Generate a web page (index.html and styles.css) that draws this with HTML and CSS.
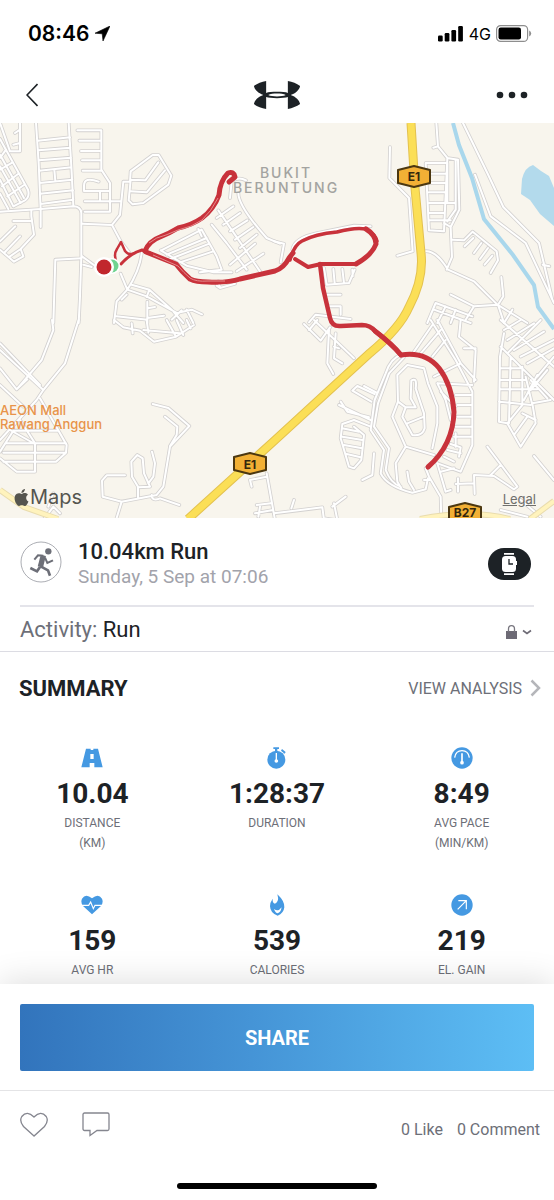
FILE: index.html
```html
<!DOCTYPE html>
<html lang="en">
<head>
<meta charset="utf-8">
<meta name="viewport" content="width=device-width, initial-scale=1">
<title>10.04km Run</title>
<link rel="stylesheet" href="styles.css">
</head>
<body>
<div class="status">
  <div class="status-time"><span>08:46</span>
    <svg width="15" height="15" viewBox="0 0 15 15"><path d="M15 0L0 7.200 7.200 7.800 8 15z" stroke="#000" stroke-width=".6"/></svg>
  </div>
  <div class="status-right">
    <svg width="26" height="16" viewBox="0 0 26 16"><rect y="9.500" width="4.700" height="6" rx="1.200"/><rect x="6.700" y="7" width="4.700" height="8.500" rx="1.200"/><rect x="13.400" y="4" width="4.700" height="11.500" rx="1.200"/><rect x="20.200" width="4.700" height="15.500" rx="1.200"/></svg>
    <span>4G</span>
    <svg width="36" height="17" viewBox="0 0 36 17"><rect x=".6" y=".6" width="31" height="15.800" rx="4" fill="none" stroke="#8e8e8e" stroke-width="1.200"/><rect x="2.500" y="2.500" width="22.500" height="12" rx="2.200"/><path d="M33.200 5.500q2 .8 2 3t-2 3z" fill="#8e8e8e"/></svg>
  </div>
</div>
<header class="nav">
  <button class="icon-btn" aria-label="Back"><svg width="12" height="24" viewBox="0 0 12 24"><path d="M11.500 1L1 12l10.500 11" fill="none" stroke="#1d2226" stroke-width="1.600"/></svg></button>
  <svg class="logo" width="48" height="28" viewBox="0 0 132 80" role="img" aria-label="Logo"><path fill-rule="evenodd" d="M35 0C22 2 10 7 0 14C2 25 12 35 27 40C12 45 2 55 0 66C10 73 22 78 35 80V46C46 50 86 50 97 46V80C110 78 122 73 132 66C130 55 120 45 105 40C120 35 130 25 132 14C122 7 110 2 97 0V34C86 30 46 30 35 34zM41 40C52 34.500 80 34.500 91 40C80 45.500 52 45.500 41 40z"/></svg>
  <button class="icon-btn" aria-label="More"><svg width="32" height="8" viewBox="0 0 32 8"><circle cx="4" cy="4" r="3.300"/><circle cx="16" cy="4" r="3.300"/><circle cx="28" cy="4" r="3.300"/></svg></button>
</header>

<section class="map" aria-label="Route map">
  <svg class="map-art" viewBox="0 0 554 395">
    <defs>
      <g id="roads">
        <g transform="scale(.33333)">
          <path d="M108 0L116 120 122 260 122 312M206 0L214 130 220 248M114 53L210 43M115 82L211 74M116 112L213 104M118 143L214 133M119 180L217 170M121 212L219 202M122 243L220 230M163 140L166 175"/>
          <path class="main" d="M0 266L122 258 220 250Q242 250 244 270V400L240 520 236 600"/>
          <path d="M0 48L84 200Q90 222 75 232L40 250M0 95L72 225M0 130L62 240M0 170L40 250M18 80L0 105M38 118L0 140M55 152L6 190M72 186L22 220M0 212L25 258"/>
          <path d="M0 0L30 85H60V0M60 20L45 30M60 60L40 65M232 22H304V140L330 180V266H254M238 53H304M243 84H304M246 112H304M248 143H306M296 176Q252 160 252 188V204H330M254 235H362M300 204V235"/>
          <path d="M94 262V280L102 335 62 378 70 400 42 416 0 380M40 294H94M46 310L0 355M60 340L12 390M62 378L30 400"/>
          <path d="M246 302L336 306 360 276 370 176H390L392 145 458 96H476L514 158 505 185 430 240 398 244 386 232 392 170 436 172 475 118M392 205L440 208 495 142M336 306L362 355 390 392"/>
          <path d="M160 600L166 410 244 406M246 400L290 432M250 425L275 432"/>
          <path d="M425 390Q420 440 382 500L350 535 342 600M362 452L382 500 440 520 530 570 575 560 606 574M395 485L448 500 515 560 550 600M448 500L440 522M365 530L380 515M350 580L442 590 M442 536V600M442 556L465 552M442 585L492 578M515 590L545 562M560 560L580 600"/>
          <path d="M484 382L605 320 650 400 665 440 600 448M482 382L560 428 640 448 695 448M500 395L620 345M510 408L628 362M540 418L640 385M595 318L605 340M655 262L780 445M635 305L680 360 740 440M650 285L700 250M670 305L720 270M690 325L742 292M705 350L760 312M720 375L770 335M690 425L765 362M710 445L790 392M690 225L695 175Q715 160 738 172M715 210Q715 250 800 345L840 362M655 475L660 495 650 488M660 495L705 482"/>
        </g>
        <g transform="translate(274 0) scale(.33333)">
          <path d="M348 72L346 165 405 225 416 385M370 398L416 385M452 385Q485 380 522 440L600 475 670 545 760 600M487 0L492 70 478 74M492 70L520 105 552 110 556 260 530 312 534 402 518 440M520 105L510 325 465 322 455 120H515M462 152H514M464 180H512M465 208H512M466 240H545M466 270H508M466 292H530M520 240V120M545 110V260L520 295M530 312L510 300M536 350L570 352 596 326 668 385 672 412 650 450M572 370L598 345M600 390L622 360M618 408L642 375M632 425L655 398"/>
          <path d="M567 0L640 150 688 252 795 360 835 530M603 155L650 280 755 360 840 540M806 425L826 430"/>
          <path d="M682 462L688 520 672 545 600 550 530 515M600 550L575 590M672 545L690 600M485 540L460 600M485 540L595 580M515 550L490 600M545 560L530 600M480 560L590 600M715 560L690 600M55 380Q60 345 130 330L240 308 290 310M0 355L30 362 20 418"/>
          <path d="M150 435L158 485 225 480 242 440M178 438L182 480M205 438L210 480M235 440L236 460M158 515H200M160 550H200V575M105 598L125 575 230 588"/>
        </g>
        <g transform="translate(0 197) scale(.33333)">
          <path class="main" d="M0 90L130 210 195 130 236 0M130 210L110 240 0 360"/>
          <path d="M156 0L160 30 125 120 50 208M0 70L120 195M0 145L50 208M0 195L70 260M50 208L82 178M120 235L200 375 198 398 168 425H10M30 330L105 372V455H50L0 415M0 395L40 332H172M20 370H198M10 398H198M60 300L105 370"/>
          <path d="M342 0L370 22 420 32 462 65 528 50 582 15M395 10L398 40M430 30L540 40M440 0L445 38M500 0L528 50M530 0L550 45M560 0L572 25"/>
          <path d="M458 252L505 264 568 318 510 380 490 500 470 525 365 545 348 600M495 290L532 320 530 345 510 378M375 466H320L306 482 308 530 365 545M455 525Q455 545 480 535L538 555M414 535V500L396 470 394 425 412 405 428 415 432 460 450 500 414 502M456 395L465 430 460 470 445 490"/>
          <path d="M800 460L825 600M755 500L750 480 800 470M770 555L812 550M765 580L818 570M775 590L780 560M130 600L160 560 180 580M145 560L160 520"/>
        </g>
        <g transform="translate(274 197) scale(.33333)">
          <path d="M90 12L140 62 168 22M120 0L240 115M105 30L130 0M165 30L160 130 178 162M185 40L180 115 205 130M180 80L195 85"/>
          <path d="M380 105Q350 115 335 160L302 240 290 330 330 390 320 460Q340 500 415 518L455 508 462 475M390 112L345 160 312 250 300 320 345 385 335 450Q350 490 380 500M400 135L370 165 372 245 355 290 395 380 480 405M400 135L450 145 462 190 490 260V310L475 385M372 245L395 262 385 290 415 345Q445 350 452 325L450 280 425 205Q430 170 412 182L410 235 425 262 395 262M400 310L450 290M395 380L365 430 370 485 382 505M400 455L405 485 420 510"/>
          <path d="M302 222L250 198 235 212 292 245M270 198L308 218M200 245L220 275 285 292M195 255L290 300M290 320L240 300 205 312 200 355 225 440 240 445 262 420 270 345 240 320M205 325L255 335M205 350L265 360M210 375L265 385M218 402L260 412M300 400L295 465 265 480"/>
          <path d="M420 95L475 15M440 100L500 30M475 110L515 60M470 0L545 120 595 215V375L560 455 490 430M490 0L560 130M560 0L555 50 605 90 600 185M570 85H605M480 170L560 130 605 180M490 190L595 195M500 215L545 260M545 225H595M550 255H595M550 290H595M545 320H595M540 350H595M530 372L560 382 555 410M520 390L560 400M510 410L540 425M545 340V380M490 190L515 240 530 300"/>
          <path d="M640 380L730 500 720 508 660 468 600 465 602 522M680 435L650 465M600 490L545 492M552 475V515M490 430L515 515 530 510M500 455L540 445M780 408L840 480M455 445L465 470 500 530 502 600M450 480L470 480"/>
          <path d="M680 0L840 140M690 30L740 0M700 60L780 10M720 90L810 35M740 110L840 60M760 130L840 85M680 80L760 160 840 240M690 40L678 110 675 305 700 310 740 380 785 310 775 250 830 240M680 145H745M680 180H755M680 208H790M675 245L770 255M710 110L705 310M745 140V255L700 310M755 170L775 255M745 280L785 300M720 345L760 290M770 180L820 235M790 165L750 240M820 150L770 210M800 0L700 100M840 110L790 170"/>
          <path d="M0 580L145 562 150 600M60 540L52 565M150 595L185 600M175 560L215 530M180 550L190 600M680 570L760 590M740 540L800 590"/>
        </g>
      </g>
    </defs>
    <rect width="554" height="395" fill="#f8f5ed"/>
    <path d="M522 56q3-12 11-14l8 6 8 5 5 12v38l-14-12-10-14-9-6z" fill="#b3daec"/>
    <use href="#roads" class="casing"/>
    <use href="#roads" class="road"/>
    <path d="M453 0L459 22 472 55 484 96 513 132 534 162 538 184 554 206" fill="none" stroke="#a9d7ec" stroke-width="4"/>
    <path d="M0 367L24 384 58 396M420 396Q470 386 510 396M530 396L554 378" fill="none" stroke="#e9dcae" stroke-width="6"/>
    <path d="M0 367L24 384 58 396M420 396Q470 386 510 396M530 396L554 378" fill="none" stroke="#fff3bd" stroke-width="4"/>
    <path class="hwy-edge" d="M411 0L415 65 421 130Q424 156 409 184Q400 205 370 230L274 318 188 396"/>
    <path class="hwy-mid" d="M411 0L415 65 421 130Q424 156 409 184Q400 205 370 230L274 318 188 396"/>
    <g class="route">
      <path d="M117 140Q113 132 117 126L121 119L125 128Q129 133 134 130" stroke-width="2.500"/>
      <path d="M121 141Q131 130 142 127L152 131" stroke-width="3"/>
      <path d="M290 137Q294 122 302 118Q315 111 337 109Q355 104 366 106Q376 112 377 118" stroke-width="3.500"/>
      <path d="M366 106Q376 112 376 121Q372 132 356 141" stroke-width="5"/>
      <path d="M356 141L321 141L308 144L295 136" stroke-width="4"/>
      <path d="M145 128Q149 118 160 114Q170 110 178 105Q192 102 202 95Q214 86 219 72Q220 58 228 50Q234 48 235 54L229 59" stroke-width="5"/>
      <path d="M146 129L176 141Q182 149 190 156Q196 159 208 159Q228 160 240 156L275 148Q284 145 289 135L293 130" stroke-width="5"/>
      <path d="M320 141L323 165L330 195Q332 204 341 203L362 202Q370 202 375 208Q392 221 401 232" stroke-width="4.500"/>
      <path d="M375 208Q392 221 401 232Q425 228 439 245Q452 262 454 289Q453 322 428 344" stroke-width="5"/>
    </g>
    <path class="route-gap" d="M149 120Q156 114 166 112L178 107Q192 104 202 97Q211 89 218 75M153 132L178 143Q184 150 190 155Q196 159 208 158H225"/>
    <circle cx="112" cy="143" r="8" fill="#fff"/><circle cx="112" cy="143" r="6.500" fill="#6fd390"/>
    <circle cx="104" cy="144" r="10" fill="#fff"/><circle cx="104" cy="144" r="7.500" fill="#c1272d"/>
    <g class="shield">
      <path d="M414 43l16 4v13l-16 4-16-4V47z"/><path d="M250 330l16 4v13l-16 4-16-4v-13z"/><path d="M465 380l16 4v13l-16 4-16-4v-13z"/>
    </g>
    <g class="shield-text"><text x="414" y="58">E1</text><text x="250" y="346">E1</text><text x="465" y="394">B27</text></g>
    <g class="place"><text x="286" y="55">BUKIT</text><text x="286" y="70">BERUNTUNG</text></g>
    <g class="poi"><text x="0" y="292">AEON Mall</text><text x="0" y="306">Rawang Anggun</text></g>
  </svg>
  <div class="map-credit">
    <span class="maps-brand"><svg width="15" height="17" viewBox="2 0 20 24"><path d="M12.152 6.896c-.948 0-2.415-1.078-3.960-1.040-2.040.027-3.910 1.183-4.961 3.014-2.117 3.675-.546 9.103 1.519 12.090 1.013 1.454 2.208 3.090 3.792 3.039 1.520-.065 2.090-.987 3.935-.987 1.831 0 2.350.987 3.960.948 1.637-.026 2.676-1.480 3.676-2.948 1.156-1.688 1.636-3.325 1.662-3.415-.039-.013-3.182-1.221-3.220-4.857-.026-3.040 2.480-4.494 2.597-4.559-1.429-2.090-3.623-2.324-4.390-2.376-2-.156-3.675 1.090-4.610 1.090zM15.530 3.830c.843-1.012 1.400-2.427 1.245-3.830-1.207.052-2.662.805-3.532 1.818-.780.896-1.454 2.338-1.273 3.714 1.338.104 2.715-.688 3.559-1.701"/></svg>Maps</span>
    <a href="#legal">Legal</a>
  </div>
</section>

<main>
  <section class="workout">
    <svg class="runner" width="42" height="42" viewBox="0 0 126 126"><circle cx="63" cy="63" r="60" fill="none" stroke="#9a9ca3" stroke-width="2.500"/><circle cx="85" cy="31" r="9.500" fill="#6d6f78"/><g fill="none" stroke="#6d6f78" stroke-width="6"><path d="M70 44L54 43 43 56M75 50L82 66 99 58"/><path d="M60 78L51 91 31 81M62 76L84 88 90 104" stroke-width="8"/><path d="M70 43L61 78" stroke-width="16"/></g></svg>
    <div class="workout-text"><h1>10.04km Run</h1><p>Sunday, 5 Sep at 07:06</p></div>
    <span class="device"><svg width="15" height="22" viewBox="0 0 15 22"><path d="M2 0h10v1.700H2zM2 20.300h10V22H2z"/><rect y="3" width="14" height="16" rx="3.500"/><rect x="13" y="8" width="2" height="4"/><path d="M7 6v5h4" fill="none" stroke="#1d2226" stroke-width="1.300"/></svg></span>
  </section>
  <section class="activity">
    <p>Activity: <b>Run</b></p>
    <button class="privacy" aria-label="Privacy"><svg width="26" height="14" viewBox="0 0 26 14"><rect y="6" width="11" height="8" fill="#6d6a75"/><path d="M2.500 7V4q0-3.300 3-3.300t3 3.300v3" fill="none" stroke="#77757e" stroke-width="1.300"/><path d="M17 5.500l4 3 4-3" fill="none" stroke="#6d6a75" stroke-width="1.600"/></svg></button>
  </section>
  <div class="summary-head">
    <h2>SUMMARY</h2>
    <a href="#analysis">VIEW ANALYSIS <svg width="11" height="18" viewBox="0 0 11 18"><path d="M1.500 1.500L9 9l-7.500 7.500" fill="none" stroke="#b5b6ba" stroke-width="2.500"/></svg></a>
  </div>
  <section class="stats">
    <div class="stat"><svg class="stat-icon" viewBox="0 0 66 66"><path fill-rule="evenodd" d="M15 5H51L65 61H1zM29 5V9H37V5zM28 21V36H38V21zM26 48V61H40V48z"/></svg><strong>10.04</strong><span>DISTANCE<br>(KM)</span></div>
    <div class="stat"><svg class="stat-icon" viewBox="0 0 66 66"><circle cx="31" cy="38" r="27"/><path d="M22 1h17v5h-5v6h-7V6h-5zM48 6l11 9-3 5-11-9z"/><path d="M31 18v22" stroke="#fff" stroke-width="4"/><circle cx="31" cy="42" r="5.500" fill="#fff"/></svg><strong>1:28:37</strong><span>DURATION</span></div>
    <div class="stat"><svg class="stat-icon" viewBox="0 0 66 66"><circle cx="33" cy="33" r="32"/><path d="M11 32Q14 11 33 11t22 21" fill="none" stroke="#fff" stroke-width="4"/><path d="M33 19v28" stroke="#fff" stroke-width="5"/><circle cx="33" cy="47" r="5.500" fill="#fff"/></svg><strong>8:49</strong><span>AVG PACE<br>(MIN/KM)</span></div>
    <div class="stat"><svg class="stat-icon" viewBox="0 0 66 66"><path d="M33 61L6 36Q-2 25 3 14Q14-3 33 13Q52-3 63 14Q68 25 60 36z"/><path d="M0 34h23l6-10 8 20 5-10h24" fill="none" stroke="#fff" stroke-width="3.500"/></svg><strong>159</strong><span>AVG HR</span></div>
    <div class="stat"><svg class="stat-icon" viewBox="0 0 66 66"><path fill-rule="evenodd" d="M34 1Q56 21 55 40Q53 58 35 65Q13 58 12 37Q12 25 20 14Q19 28 27 29Q41 24 34 1zM24 45Q29 58 35 58Q44 56 47 40Q39 50 34 49Q29 49 24 45z"/></svg><strong>539</strong><span>CALORIES</span></div>
    <div class="stat"><svg class="stat-icon" viewBox="0 0 66 66"><circle cx="33" cy="33" r="32"/><path d="M20 46L46 20M22 20h24v26" fill="none" stroke="#fff" stroke-width="3.500"/></svg><strong>219</strong><span>EL. GAIN</span></div>
  </section>
</main>

<footer>
  <div class="share-wrap"><button class="share">SHARE</button></div>
  <div class="social">
    <button class="icon-btn" aria-label="Like"><svg width="28" height="25" viewBox="0 0 28 25"><path d="M14 24L3.500 14.500Q-1 9 1.800 4.500 7-2 14 5 21-2 26.200 4.500 29 9 24.500 14.500z"/></svg></button>
    <button class="icon-btn" aria-label="Comment"><svg width="28" height="25" viewBox="0 0 28 25"><path d="M2.500 1h23a1.500 1.500 0 0 1 1.500 1.500v14.500a1.500 1.500 0 0 1-1.500 1.500H15l-7 5v-5H2.500A1.500 1.500 0 0 1 1 17V2.500A1.500 1.500 0 0 1 2.500 1z"/></svg></button>
    <p class="counts"><span>0 Like</span><span>0 Comment</span></p>
  </div>
  <div class="home-bar"></div>
</footer>
</body>
</html>
```
FILE: styles.css
```css
* { box-sizing: border-box; }
body {
  margin: 0;
  min-height: 100vh;
  display: flex;
  flex-direction: column;
  background: #fff;
  color: #1d2226;
  font-family: Roboto, "Liberation Sans", sans-serif;
}
h1, h2, p { margin: 0; }
svg { display: block; flex: none; }
button { border: 0; padding: 0; background: none; font: inherit; color: inherit; }
a { color: inherit; text-decoration: none; }

.status {
  display: flex;
  justify-content: space-between;
  align-items: center;
  height: 67px;
  padding: 0 22px 0 28px;
  font-family: Inter, sans-serif;
  color: #000;
}
.status-time { display: flex; align-items: center; gap: 6px; font-size: 21px; font-weight: 600; }
.status-right { display: flex; align-items: center; gap: 5px; font-size: 16px; }

.nav {
  display: grid;
  grid-template-columns: 1fr auto 1fr;
  align-items: center;
  height: 56px;
  padding: 0 26px;
}
.nav > :last-child { justify-self: end; }
.nav > :first-child { justify-self: start; }
.icon-btn svg, .logo { fill: #1d2226; }

.map { position: relative; overflow: hidden; }
.map-art { width: 100%; height: auto; }
.casing, .road { fill: none; stroke-linejoin: round; stroke-linecap: round; }
.casing { stroke: #d3d1d0; stroke-width: 11; }
.road { stroke: #fff; stroke-width: 6; }
.hwy-edge { fill: none; stroke: #e3c14f; stroke-width: 9; }
.hwy-mid { fill: none; stroke: #fbdf57; stroke-width: 7; }
.route { fill: none; stroke: #c8323b; stroke-linejoin: round; stroke-linecap: round; }
.route-gap { fill: none; stroke: #e58a8c; stroke-width: 1; }
.shield { fill: #f2b035; stroke: #4b3710; stroke-width: 2; stroke-linejoin: round; }
.shield-text { font: 700 12px Inter, sans-serif; fill: #33270d; text-anchor: middle; }
.place { font: 500 14px Inter, sans-serif; fill: #a3a3a0; text-anchor: middle; letter-spacing: 2px; }
.poi { font: 500 13px Inter, sans-serif; fill: #e89349; }
.map-credit {
  position: absolute;
  inset: auto 18px 9px 14px;
  display: flex;
  justify-content: space-between;
  align-items: center;
  font-family: Inter, sans-serif;
  color: #55554f;
}
.maps-brand { display: flex; align-items: center; gap: 1px; font-size: 20px; }
.maps-brand svg { fill: #55554f; }
.map-credit a { font-size: 13px; text-decoration: underline; color: #6f6f6c; padding-top: 4px; }

.workout {
  display: flex;
  align-items: center;
  gap: 16px;
  margin: 0 20px;
  height: 89px;
  border-bottom: 2px solid #e4e4ea;
}
.workout-text { flex: 1; padding-top: 4px; }
.workout h1 { font-size: 22px; line-height: 26px; font-weight: 500; }
.workout p { font-size: 19px; line-height: 24px; color: #a2a3ab; }
.device {
  display: flex;
  align-items: center;
  justify-content: center;
  width: 43px;
  height: 32px;
  margin: 4px 3px 0 0;
  border-radius: 16px;
  background: #1d2226;
}
.device svg { fill: #fff; }

.activity {
  display: flex;
  align-items: center;
  justify-content: space-between;
  height: 45px;
  padding: 0 22px 0 20px;
  border-bottom: 1px solid #dcdce3;
  font-size: 22px;
  color: #6d6f78;
}
.activity b { font-weight: 400; color: #1d2226; }
.privacy { padding-top: 5px; }

.summary-head {
  display: flex;
  align-items: center;
  justify-content: space-between;
  height: 72px;
  padding: 0 13px 0 19px;
}
.summary-head h2 { font-size: 22px; font-weight: 700; }
.summary-head a { display: flex; align-items: center; gap: 8px; font-size: 16px; color: #6d6f78; }

.stats {
  display: grid;
  grid-template-columns: repeat(3, 1fr);
  row-gap: 41px;
  padding: 23px 0 4px;
}
.stat { display: flex; flex-direction: column; align-items: center; text-align: center; }
.stat-icon { width: 22px; height: 22px; margin-bottom: 7px; fill: #4599e2; }
.stat strong { font-size: 28px; line-height: 36px; margin-bottom: 1px; }
.stat span { font-size: 12px; line-height: 20px; color: #6d6f78; }

footer {
  position: relative;
  margin-top: auto;
  background: #fff;
  box-shadow: 0 -4px 30px rgba(0, 0, 0, .12);
}
.share-wrap { padding: 20px 20px 19px; border-bottom: 1px solid #e4e4e6; }
.share {
  display: block;
  width: 100%;
  height: 67px;
  border-radius: 2px;
  background: linear-gradient(90deg, #3274bc, #4594d6 45%, #5dbef5);
  color: #fff;
  font-size: 20px;
  font-weight: 700;
}
.social { display: flex; gap: 34px; align-items: flex-start; padding: 21px 14px 0 20px; height: 92px; }
.social svg { fill: none; stroke: #85868f; stroke-width: 1.300px; }
.counts { display: flex; gap: 14px; margin-left: auto; padding-top: 8px; font-size: 16px; line-height: 20px; color: #6d6f78; }
.home-bar { width: 36%; height: 6px; margin: 0 auto 11px; border-radius: 3px; background: #000; }
```
